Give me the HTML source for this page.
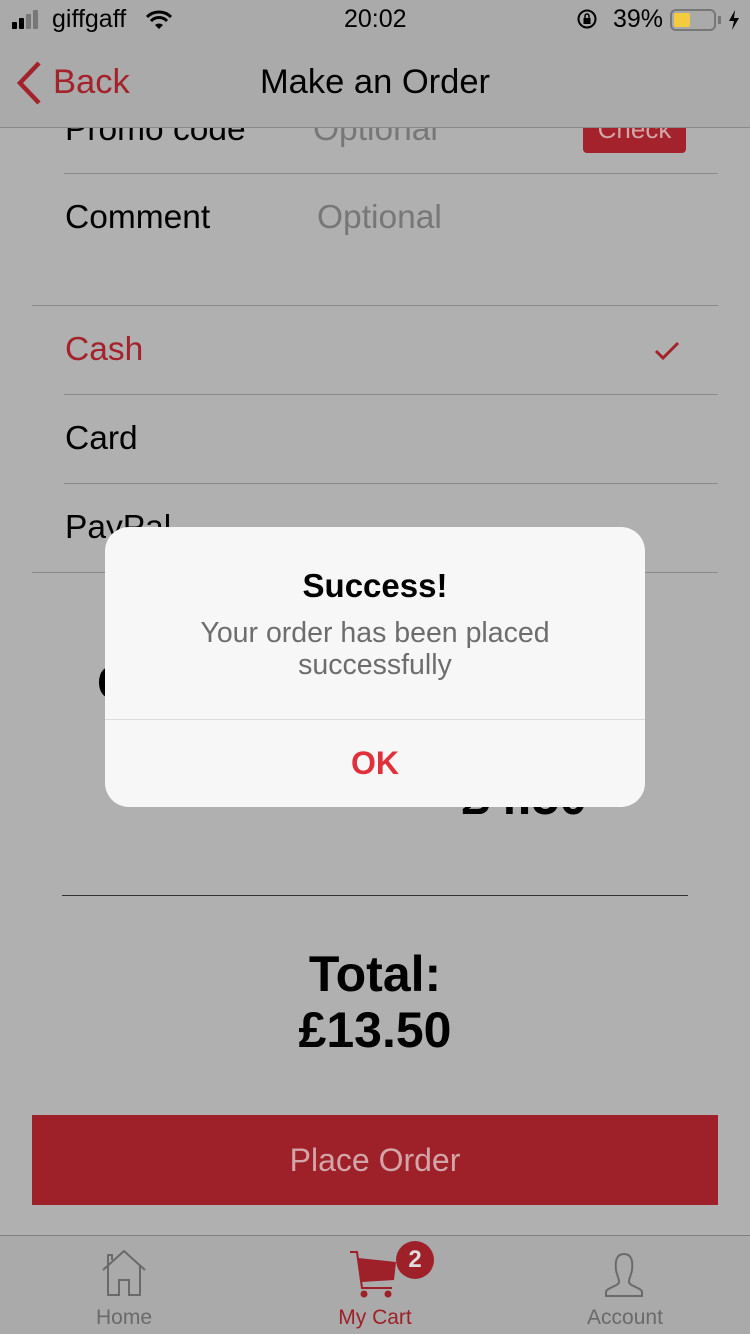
<!DOCTYPE html>
<html><head><meta charset="utf-8"><style>
*{margin:0;padding:0;box-sizing:border-box}
body{width:750px;height:1334px;background:#b0b0b0;font-family:"Liberation Sans",sans-serif;position:relative;overflow:hidden;color:#000}
.a{position:absolute;white-space:nowrap}
.line{position:absolute;height:1px;background:#8a8a8a}
.t{font-size:33.5px}
</style></head><body>
<div class="a" style="left:0;top:0;width:750px;height:128px;background:#aaaaaa"></div>
<div class="a" style="left:12px;top:22px;width:5px;height:7px;background:#000;border-radius:1px"></div>
<div class="a" style="left:19px;top:18px;width:5px;height:11px;background:#000;border-radius:1px"></div>
<div class="a" style="left:26px;top:14px;width:5px;height:15px;background:#777;border-radius:1px"></div>
<div class="a" style="left:33px;top:10px;width:5px;height:19px;background:#777;border-radius:1px"></div>
<div class="a" style="left:52px;top:5px;font-size:25px">giffgaff</div>
<svg class="a" style="left:146px;top:10px" width="26" height="20" viewBox="0 0 26 20"><path d="M1 7 A17 17 0 0 1 25 7" stroke="#000" stroke-width="3" fill="none"/><path d="M5 11 A11 11 0 0 1 21 11" stroke="#000" stroke-width="3" fill="none"/><path d="M9 15 A6 6 0 0 1 17 15 L13 19Z" fill="#000"/></svg>
<div class="a" style="left:344px;top:5px;font-size:25px">20:02</div>
<svg class="a" style="left:576px;top:8px" width="22" height="22" viewBox="0 0 22 22"><circle cx="11" cy="11" r="8.5" stroke="#000" stroke-width="2" fill="none"/><rect x="7.5" y="10" width="7" height="6" fill="#000"/><path d="M9 10 V8 a2 2 0 0 1 4 0 V10" stroke="#000" stroke-width="1.5" fill="none"/></svg>
<div class="a" style="left:613px;top:5px;font-size:25px">39%</div>
<div class="a" style="left:670px;top:9px;width:46px;height:22px;border:2px solid #777;border-radius:6px"></div>
<div class="a" style="left:674px;top:13px;width:16px;height:14px;background:#f4cb3e;border-radius:2px"></div>
<div class="a" style="left:718px;top:16px;width:3px;height:8px;background:#777"></div>
<svg class="a" style="left:728px;top:10px" width="12" height="20" viewBox="0 0 12 20"><path d="M7 0 L1 11 H6 L4 20 L11 8 H6Z" fill="#000"/></svg>
<svg class="a" style="left:14px;top:60px" width="30" height="46" viewBox="0 0 30 46"><path d="M25 3 L6 23 L25 43" stroke="#a3222b" stroke-width="4.5" fill="none"/></svg>
<div class="a" style="left:53px;top:63px;font-size:34.5px;color:#a3222b">Back</div>
<div class="a" style="left:0;width:750px;text-align:center;top:63px;font-size:34.5px">Make an Order</div>
<div class="line" style="left:0;top:127px;width:750px"></div>
<div style="position:absolute;left:0;top:128px;width:750px;height:1106px;overflow:hidden">
<div class="a t" style="left:65px;top:-17px">Promo code</div>
<div class="a t" style="left:313px;top:-17px;color:#777">Optional</div>
<div class="a" style="left:583px;top:-16px;width:103px;height:41px;background:#a3222b;border-radius:4px;color:#d0a6a9;font-size:26px;text-align:center;line-height:34px">Check</div>
</div>
<div class="line" style="left:64px;top:173px;width:654px"></div>
<div class="a t" style="left:65px;top:199px">Comment</div>
<div class="a t" style="left:317px;top:199px;color:#777">Optional</div>
<div class="line" style="left:32px;top:305px;width:686px"></div>
<div class="a t" style="left:65px;top:331px;color:#a3222b">Cash</div>
<svg class="a" style="left:654px;top:340px" width="26" height="22" viewBox="0 0 26 22"><path d="M2 11 L9 18 L24 3" stroke="#a3222b" stroke-width="3" fill="none"/></svg>
<div class="line" style="left:64px;top:394px;width:654px"></div>
<div class="a t" style="left:65px;top:420px">Card</div>
<div class="line" style="left:64px;top:483px;width:654px"></div>
<div class="a t" style="left:65px;top:509px">PayPal</div>
<div class="line" style="left:32px;top:572px;width:686px"></div>
<div class="a" style="left:97px;top:656px;font-size:48px;font-weight:bold">C</div>
<div class="a" style="left:462px;top:768px;font-size:50px;font-weight:bold">£4.50</div>
<div class="line" style="left:62px;top:895px;width:626px;background:#333"></div>
<div class="a" style="left:0;width:750px;text-align:center;top:946px;font-size:50px;font-weight:bold;line-height:56px">Total:<br>£13.50</div>
<div class="a" style="left:32px;top:1115px;width:686px;height:90px;background:#9e2029;color:#d3a5a8;font-size:32px;text-align:center;line-height:90px">Place Order</div>
<div class="a" style="left:0;top:1235px;width:750px;height:99px;background:#aaaaaa;border-top:1px solid #808080"></div>
<svg class="a" style="left:101px;top:1250px" width="46" height="48" viewBox="0 0 46 48"><path d="M2 20 L23 1 L44 20 M7 16 V45 H18 V30 H28 V45 H39 V16 M7 16 V5 H11 V10" stroke="#6a6a6a" stroke-width="2" fill="none"/></svg>
<div class="a" style="left:0;width:248px;text-align:center;top:1306px;font-size:21px;color:#6a6a6a">Home</div>
<svg class="a" style="left:350px;top:1250px" width="52" height="48" viewBox="0 0 52 48"><path d="M0 2 H7 L12 38 H42" stroke="#9e2029" stroke-width="2" fill="none"/><path d="M8 8 L46 12 L44 30 L12 32Z" fill="#9e2029"/><circle cx="14" cy="44" r="3.5" fill="#9e2029"/><circle cx="38" cy="44" r="3.5" fill="#9e2029"/></svg>
<div class="a" style="left:396px;top:1241px;width:38px;height:38px;border-radius:50%;background:#9e2029;color:#ddd;font-size:24px;font-weight:bold;text-align:center;line-height:38px">2</div>
<div class="a" style="left:250px;width:250px;text-align:center;top:1306px;font-size:21px;color:#9e2029">My Cart</div>
<svg class="a" style="left:602px;top:1252px" width="44" height="46" viewBox="0 0 44 46"><path d="M22 2 C14 2 13 10 14 18 C15 24 17 26 17 30 C17 34 4 36 4 40 V44 H40 V40 C40 36 27 34 27 30 C27 26 29 24 30 18 C31 10 30 2 22 2Z" stroke="#6a6a6a" stroke-width="2" fill="none"/></svg>
<div class="a" style="left:500px;width:250px;text-align:center;top:1306px;font-size:21px;color:#6a6a6a">Account</div>
<div class="a" style="left:105px;top:527px;width:540px;height:280px;background:#f7f7f7;border-radius:24px;overflow:hidden">
<div class="a" style="left:0;width:540px;text-align:center;top:40px;font-size:33px;font-weight:bold">Success!</div>
<div class="a" style="left:0;width:540px;text-align:center;top:90px;font-size:28.5px;color:#6d6d6d;line-height:32px;white-space:normal">Your order has been placed<br>successfully</div>
<div class="a" style="left:0;top:192px;width:540px;height:1px;background:#dcdcdc"></div>
<div class="a" style="left:0;width:540px;text-align:center;top:218px;font-size:32px;font-weight:bold;color:#e0303c">OK</div>
</div>
</body></html>
